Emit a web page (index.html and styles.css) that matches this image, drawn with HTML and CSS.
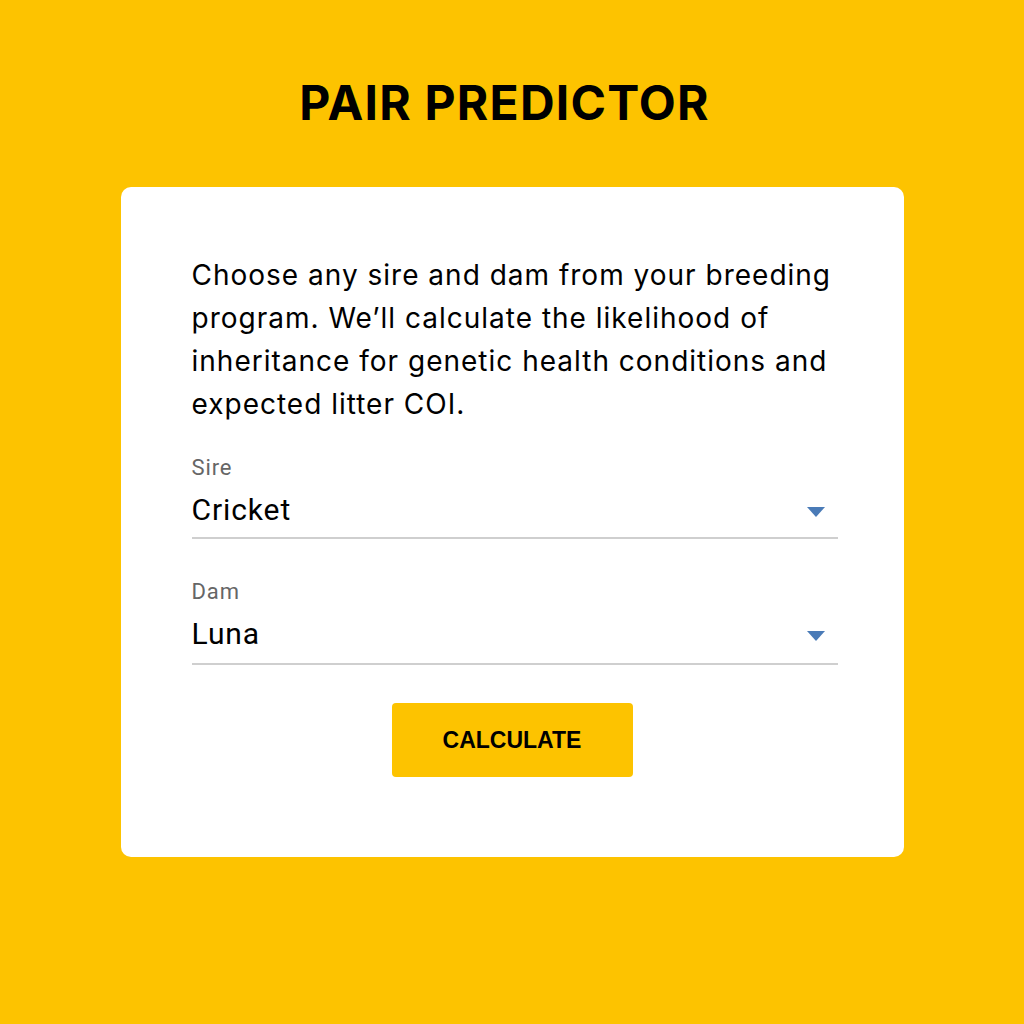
FILE: index.html
```html
<!DOCTYPE html>
<html>
<head>
<meta charset="utf-8">
<link rel="stylesheet" href="styles.css">
</head>
<body>
<h1 class="title">PAIR PREDICTOR</h1>
<main class="card">
  <p class="intro">Choose any sire and dam from your breeding program. We’ll calculate the likelihood of inheritance for genetic health conditions and expected litter COI.</p>
  <div class="field">
    <label class="field-label">Sire</label>
    <div class="select">
      <span class="select-value">Cricket</span>
      <svg class="arrow" width="18" height="10" viewBox="0 0 18 10"><path d="M0 0H18L9 10Z" fill="#4a7bb7"/></svg>
    </div>
  </div>
  <div class="field field-dam">
    <label class="field-label">Dam</label>
    <div class="select select-dam">
      <span class="select-value">Luna</span>
      <svg class="arrow" width="18" height="10" viewBox="0 0 18 10"><path d="M0 0H18L9 10Z" fill="#4a7bb7"/></svg>
    </div>
  </div>
  <div class="actions">
    <button class="btn">CALCULATE</button>
  </div>
</main>
</body>
</html>
```
FILE: styles.css
```css
html, body {
  margin: 0;
  padding: 0;
}
body {
  background: #fdc300;
  min-height: 1024px;
  font-family: Inter, "Noto Sans", sans-serif;
  color: #000;
}
.title {
  margin: 0 0 55px;
  padding: 74px 15px 0 0;
  text-align: center;
  font-family: Inter, sans-serif;
  font-weight: 700;
  font-size: 48px;
  line-height: 58px;
  letter-spacing: 1.2px;
  color: #000;
}
.card {
  display: block;
  width: 783px;
  margin: 0 auto;
  background: #fff;
  border-radius: 10px;
  box-sizing: border-box;
  padding: 67px 66px 80px 71px;
}
.intro {
  margin: 0;
  font-size: 28px;
  line-height: 43px;
  letter-spacing: 1px;
}
.field {
  margin-top: 29px;
  display: flex;
  flex-direction: column;
}
.field-dam {
  margin-top: 40px;
}
.field-label {
  font-family: Roboto, sans-serif;
  font-size: 22px;
  line-height: 26px;
  letter-spacing: 0.9px;
  color: #666;
}
.select {
  margin-top: 11px;
  display: flex;
  align-items: center;
  justify-content: space-between;
  padding-bottom: 9px;
  border-bottom: 2px solid #cfcfcf;
}
.select-dam {
  padding-bottom: 11px;
}
.select-value {
  font-family: Roboto, sans-serif;
  font-size: 30px;
  line-height: 36px;
  letter-spacing: 0.9px;
}
.arrow {
  margin-right: 13px;
  margin-top: 4px;
}
.actions {
  margin: 38px -66px 0 -71px;
  display: flex;
  justify-content: center;
}
.btn {
  width: 241px;
  height: 74px;
  background: #fdc300;
  border: none;
  border-radius: 4px;
  font-family: "Liberation Sans", Arial, sans-serif;
  font-weight: 700;
  font-size: 23px;
  color: #000;
  padding: 0;
}
```
